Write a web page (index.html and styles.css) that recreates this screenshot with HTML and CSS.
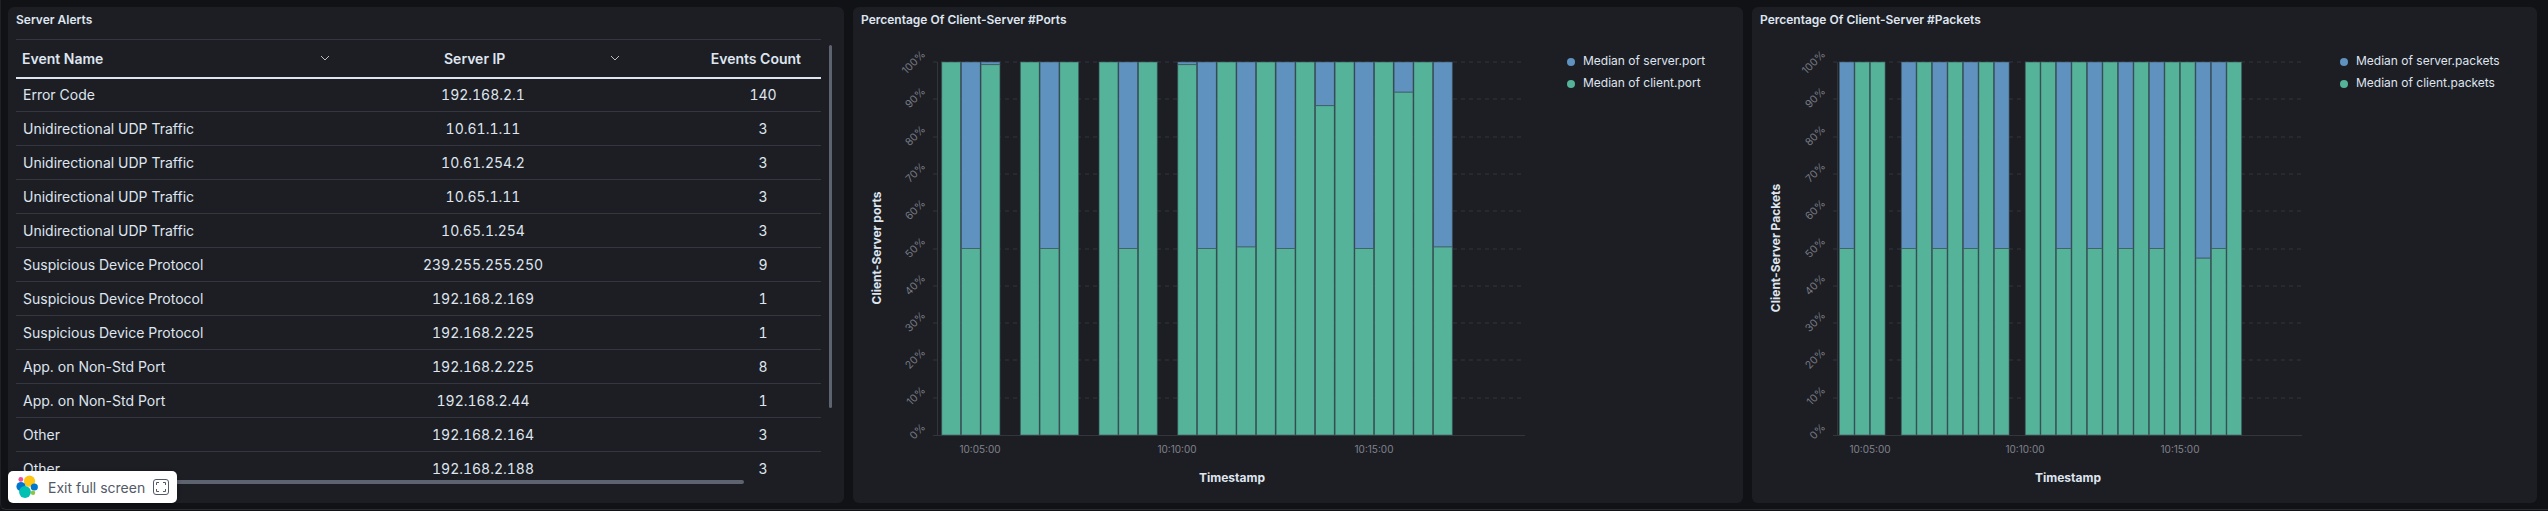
FILE: index.html
```html
<!DOCTYPE html>
<html lang="en">
<head>
    <meta charset="UTF-8">
    <title>Server Alerts Dashboard</title>
    <link rel="stylesheet" href="styles.css">
</head>
<body>
<div class="dashboard">
    <section class="panel">
        <h2 class="panel-title">Server Alerts</h2>
        <div class="table-wrap">
            <table class="alerts">
                <colgroup>
                    <col class="col-name">
                    <col class="col-ip">
                    <col class="col-count">
                </colgroup>
                <thead>
                    <tr>
                        <th>
                            <div class="th-inner">Event Name
                                <svg class="chevron" viewBox="0 0 10 6"><path d="M1 1l4 4 4-4"/></svg>
                            </div>
                        </th>
                        <th>
                            <div class="th-inner th-ip">Server IP
                                <svg class="chevron" viewBox="0 0 10 6"><path d="M1 1l4 4 4-4"/></svg>
                            </div>
                        </th>
                        <th class="th-count">Events Count</th>
                    </tr>
                </thead>
                <tbody>
                    <tr><td>Error Code</td><td>192.168.2.1</td><td>140</td></tr>
                    <tr><td>Unidirectional UDP Traffic</td><td>10.61.1.11</td><td>3</td></tr>
                    <tr><td>Unidirectional UDP Traffic</td><td>10.61.254.2</td><td>3</td></tr>
                    <tr><td>Unidirectional UDP Traffic</td><td>10.65.1.11</td><td>3</td></tr>
                    <tr><td>Unidirectional UDP Traffic</td><td>10.65.1.254</td><td>3</td></tr>
                    <tr><td>Suspicious Device Protocol</td><td>239.255.255.250</td><td>9</td></tr>
                    <tr><td>Suspicious Device Protocol</td><td>192.168.2.169</td><td>1</td></tr>
                    <tr><td>Suspicious Device Protocol</td><td>192.168.2.225</td><td>1</td></tr>
                    <tr><td>App. on Non-Std Port</td><td>192.168.2.225</td><td>8</td></tr>
                    <tr><td>App. on Non-Std Port</td><td>192.168.2.44</td><td>1</td></tr>
                    <tr><td>Other</td><td>192.168.2.164</td><td>3</td></tr>
                    <tr><td>Other</td><td>192.168.2.188</td><td>3</td></tr>
                </tbody>
            </table>
            <div class="scroll-v"></div>
            <div class="scroll-h"></div>
        </div>
    </section>

    <section class="panel">
        <h2 class="panel-title">Percentage Of Client-Server #Ports</h2>
        <svg class="chart" id="portsChart"></svg>
    </section>

    <section class="panel">
        <h2 class="panel-title">Percentage Of Client-Server #Packets</h2>
        <svg class="chart" id="packetsChart"></svg>
    </section>
</div>

<div class="exit-badge">
    <svg class="elastic-logo" viewBox="0 0 26 26">
        <circle class="logo-yellow" cx="14.5" cy="7.2" r="5.6"/>
        <circle class="logo-pink" cx="5.8" cy="5.4" r="2.4"/>
        <circle class="logo-blue" cx="6" cy="12.6" r="4.6"/>
        <circle class="logo-blue" cx="19.3" cy="13" r="3.6"/>
        <circle class="logo-teal" cx="10" cy="18" r="5.9"/>
        <circle class="logo-green" cx="18" cy="18.8" r="2.2"/>
    </svg>
    <span class="exit-label">Exit full screen</span>
    <svg class="exit-icon" viewBox="0 0 16 16">
        <rect x="0.5" y="0.5" width="15" height="15" rx="2.5"/>
        <path d="M3.5 6V3.5H6M10 3.5h2.500V6M12.500 10v2.500H10M6 12.500H3.500V10"/>
    </svg>
</div>

<script src="charts.js"></script>
</body>
</html>
```

FILE: styles.css
```css
* {
    box-sizing: border-box;
}

html, body {
    margin: 0;
    height: 511px;
    overflow: hidden;
    background-color: #101216;
}

body {
    font-family: Inter, "Liberation Sans", sans-serif;
    color: #dfe5ef;
    position: relative;
}

.dashboard {
    display: grid;
    grid-template-columns: 836px 890px 785px;
    column-gap: 9px;
    height: 510px;
    padding: 7px 0 6px 7px;
    border-bottom: 1px solid #2a2c33;
    border-left: 1px solid #1f2127;
    border-radius: 0 0 0 6px;
}

.panel {
    display: flex;
    flex-direction: column;
    background-color: #1d1e24;
    border-radius: 6px;
    padding: 5px 8px 0;
    min-width: 0;
    overflow: hidden;
}

.panel-title {
    margin: 0;
    font-size: 12px;
    line-height: 16px;
    font-weight: 600;
}

.chart {
    display: block;
    width: 890px;
    height: 469px;
    margin: 6px 0 0 -8px;
}

.table-wrap {
    position: relative;
    margin-top: 11px;
    height: 445px;
    overflow: hidden;
    width: 820px;
}

.alerts {
    table-layout: fixed;
    border-collapse: collapse;
    width: 805px;
    font-size: 14px;
}

.col-name { width: 321px; }
.col-ip { width: 290px; }
.col-count { width: 194px; }

.alerts th {
    height: 38px;
    border-top: 1px solid #343741;
    border-bottom: 2px solid #dfe5ef;
    font-weight: 600;
    padding: 0 6px;
    text-align: left;
}

.th-inner {
    display: flex;
    justify-content: space-between;
    align-items: center;
}

.th-ip {
    padding-left: 101px;
}

.alerts th.th-count {
    text-align: right;
    padding-right: 20px;
}

.chevron {
    width: 10px;
    height: 6px;
    margin-right: 1px;
    fill: none;
    stroke: #dfe5ef;
    stroke-width: 0.8;
}

.alerts td {
    height: 34px;
    padding: 0;
    border-bottom: 1px solid #343741;
    text-align: center;
    font-variant-numeric: tabular-nums;
}

.alerts td:first-child {
    text-align: left;
    padding-left: 7px;
    font-variant-numeric: normal;
}

.alerts td:nth-child(2) {
    padding-left: 2px;
}

.alerts td:last-child {
    padding-left: 78px;
}

.scroll-v {
    position: absolute;
    left: 813px;
    top: 6px;
    width: 3px;
    height: 363px;
    background-color: #5d636f;
    border-radius: 2px;
}

.scroll-h {
    position: absolute;
    left: 0;
    top: 441px;
    width: 728px;
    height: 4px;
    background-color: #5d636f;
    border-radius: 2px;
}

.grid-line {
    stroke: #33353c;
    stroke-width: 1;
    stroke-dasharray: 4 4;
}

.axis-line {
    stroke: #33353c;
    stroke-width: 1;
}

.bar {
    stroke: rgba(60, 80, 90, .6);
    stroke-width: 1;
}

.bar-server { fill: #6092c0; }
.bar-client { fill: #54b399; }

.tick-y {
    font-size: 10.5px;
    fill: #777a82;
    text-anchor: end;
}

.tick-x {
    font-size: 10px;
    fill: #80838c;
    text-anchor: middle;
}

.axis-title {
    font-size: 12px;
    font-weight: 700;
    fill: #dfe5ef;
    text-anchor: middle;
}

.legend-text {
    font-size: 12px;
    fill: #dfe5ef;
}

.exit-badge {
    position: absolute;
    left: 8px;
    top: 471px;
    width: 169px;
    height: 32px;
    display: flex;
    align-items: center;
    padding-left: 7px;
    background-color: #fff;
    border-radius: 5px;
    box-shadow: 0 1px 4px rgba(0, 0, 0, .3);
}

.elastic-logo {
    width: 26px;
    height: 26px;
}

.exit-label {
    margin-left: 7px;
    font-size: 14px;
    color: #535966;
    white-space: nowrap;
}

.exit-icon {
    width: 16px;
    height: 16px;
    margin-left: 8px;
    fill: none;
    stroke: #535966;
    stroke-width: 1;
}

.logo-yellow { fill: #fec514; }
.logo-pink { fill: #f04e98; }
.logo-blue { fill: #0077cc; }
.logo-teal { fill: #00bfb3; }
.logo-green { fill: #8cc63f; }
```

FILE: charts.js
```js
const NS = 'http://www.w3.org/2000/svg';

// page coordinates are used as the viewBox so numbers read straight off the screenshot
const PLOT_TOP = 62;
const PLOT_BOTTOM = 435;

function add(svg, name, attrs, text) {
    let el = document.createElementNS(NS, name);
    for (let key in attrs) {
        el.setAttribute(key, attrs[key]);
    }
    if (text) {
        el.textContent = text;
    }
    svg.appendChild(el);
    return el;
}

function drawChart(cfg) {
    let svg = document.getElementById(cfg.id);
    let height = PLOT_BOTTOM - PLOT_TOP;
    svg.setAttribute('viewBox', cfg.left + ' 34 890 469');

    for (let i = 0; i <= 10; i++) {
        let y = Math.round(PLOT_BOTTOM - height * i / 10);
        if (i > 0) {
            add(svg, 'line', {class: 'grid-line', x1: cfg.axisX - 4, x2: cfg.gridEnd, y1: y, y2: y});
        }
        add(svg, 'text', {
            class: 'tick-y',
            transform: 'translate(' + (cfg.axisX - 11) + ' ' + (y - 7) + ') rotate(-45)'
        }, (i * 10) + '%');
    }

    add(svg, 'line', {class: 'axis-line', x1: cfg.axisX + 0.5, x2: cfg.axisX + 0.5, y1: PLOT_TOP, y2: PLOT_BOTTOM});
    add(svg, 'line', {class: 'axis-line', x1: cfg.axisX - 4, x2: cfg.gridEnd, y1: PLOT_BOTTOM + 0.5, y2: PLOT_BOTTOM + 0.5});

    for (let slot in cfg.client) {
        let x = cfg.barStart + slot * cfg.pitch;
        let splitY = PLOT_BOTTOM - height * cfg.client[slot] / 100;
        if (cfg.client[slot] < 100) {
            add(svg, 'rect', {class: 'bar bar-server', x: x, y: PLOT_TOP, width: cfg.barWidth, height: splitY - PLOT_TOP});
        }
        add(svg, 'rect', {class: 'bar bar-client', x: x, y: splitY, width: cfg.barWidth, height: PLOT_BOTTOM - splitY});
    }

    cfg.times.forEach(function(t) {
        add(svg, 'text', {class: 'tick-x', x: t.x, y: 453}, t.label);
    });

    add(svg, 'text', {class: 'axis-title', x: cfg.timestampX, y: 482}, 'Timestamp');
    add(svg, 'text', {
        class: 'axis-title',
        transform: 'translate(' + cfg.axisTitleX + ' 248) rotate(-90)'
    }, cfg.axisTitle);

    add(svg, 'circle', {class: 'bar-server', cx: cfg.legendX, cy: 62, r: 4});
    add(svg, 'text', {class: 'legend-text', x: cfg.legendX + 12, y: 65}, cfg.legend[0]);
    add(svg, 'circle', {class: 'bar-client', cx: cfg.legendX, cy: 84, r: 4});
    add(svg, 'text', {class: 'legend-text', x: cfg.legendX + 12, y: 87}, cfg.legend[1]);
}

drawChart({
    id: 'portsChart',
    left: 853,
    axisX: 937,
    gridEnd: 1525,
    barStart: 941.7,
    pitch: 19.67,
    barWidth: 18.9,
    // client share per time slot, missing slots have no data
    client: {0: 100, 1: 50, 2: 99.3, 4: 100, 5: 50, 6: 100, 8: 100, 9: 50, 10: 100,
        12: 99.3, 13: 50, 14: 100, 15: 50.4, 16: 100, 17: 50, 18: 100, 19: 88.3,
        20: 100, 21: 50, 22: 100, 23: 91.9, 24: 100, 25: 50.4},
    times: [{x: 980, label: '10:05:00'}, {x: 1177, label: '10:10:00'}, {x: 1374, label: '10:15:00'}],
    timestampX: 1232,
    axisTitle: 'Client-Server ports',
    axisTitleX: 881,
    legendX: 1571,
    legend: ['Median of server.port', 'Median of client.port']
});

drawChart({
    id: 'packetsChart',
    left: 1752,
    axisX: 1837,
    gridEnd: 2302,
    barStart: 1839.3,
    pitch: 15.5,
    barWidth: 14.8,
    client: {0: 50, 1: 100, 2: 100, 4: 50, 5: 100, 6: 50, 7: 100, 8: 50, 9: 100, 10: 50,
        12: 100, 13: 100, 14: 50, 15: 100, 16: 50, 17: 100, 18: 50, 19: 100, 20: 50,
        21: 100, 22: 100, 23: 47.4, 24: 50, 25: 100},
    times: [{x: 1870, label: '10:05:00'}, {x: 2025, label: '10:10:00'}, {x: 2180, label: '10:15:00'}],
    timestampX: 2068,
    axisTitle: 'Client-Server Packets',
    axisTitleX: 1780,
    legendX: 2344,
    legend: ['Median of server.packets', 'Median of client.packets']
});
```
